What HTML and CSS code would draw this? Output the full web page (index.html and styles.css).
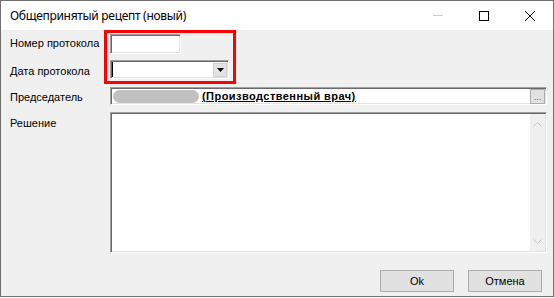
FILE: index.html
```html
<!DOCTYPE html>
<html lang="ru">
<head>
    <meta charset="UTF-8">
    <meta name="viewport" content="width=device-width, initial-scale=1.0">
    <title>Общепринятый рецепт (новый)</title>
    <link rel="stylesheet" href="styles.css">
</head>
<body>
    <div class="window">
        <div class="titlebar">
            <span class="title">Общепринятый рецепт (новый)</span>
            <div class="caption-buttons">
                <span class="cap-btn"><svg width="10" height="1" viewBox="0 0 10 1"><rect width="10" height="1" fill="#cccccc"/></svg></span>
                <span class="cap-btn"><svg width="10" height="10" viewBox="0 0 10 10"><rect x="0.5" y="0.5" width="9" height="9" fill="none" stroke="#000" stroke-width="1"/></svg></span>
                <span class="cap-btn"><svg width="10" height="10" viewBox="0 0 10 10"><path d="M0 0 L10 10 M10 0 L0 10" stroke="#000" stroke-width="1"/></svg></span>
            </div>
        </div>

        <div class="client">
            <div class="row row-num">
                <label class="lbl">Номер протокола</label>
                <div class="sunken edit-num"></div>
            </div>
            <div class="row row-date">
                <label class="lbl">Дата протокола</label>
                <div class="sunken combo">
                    <span class="caret"></span>
                    <span class="drop-btn"><svg width="7" height="4" viewBox="0 0 7 4"><polygon points="0,0 7,0 3.5,4" fill="#000"/></svg></span>
                </div>
            </div>
            <div class="row row-chair">
                <label class="lbl">Председатель</label>
                <div class="sunken chair">
                    <span class="blur"></span>
                    <span class="role">(Производственный врач)</span>
                    <span class="dots-btn">...</span>
                </div>
            </div>
            <div class="row row-memo">
                <label class="lbl">Решение</label>
                <div class="sunken memo">
                    <div class="memo-text"></div>
                    <div class="vscroll">
                        <svg width="9" height="5" viewBox="0 0 9 5"><polyline points="0.5,4.5 4.5,0.5 8.5,4.5" fill="none" stroke="#c2c2c2" stroke-width="1"/></svg>
                        <svg width="9" height="5" viewBox="0 0 9 5"><polyline points="0.5,0.5 4.5,4.5 8.5,0.5" fill="none" stroke="#c2c2c2" stroke-width="1"/></svg>
                    </div>
                </div>
            </div>
            <div class="buttons">
                <button class="btn">Ok</button>
                <button class="btn">Отмена</button>
            </div>
        </div>

        <div class="highlight"></div>
    </div>
</body>
</html>
```

FILE: styles.css
```css
body {
    margin: 0;
    background-color: #ffffff;
    font-family: "Liberation Sans", Arial, sans-serif;
    font-size: 11px;
    color: #000;
}

.window {
    position: relative;
    width: 554px;
    height: 297px;
    box-sizing: border-box;
    border: 1px solid #6f6f6f;
    background-color: #f0f0f0;
    display: flex;
    flex-direction: column;
}

.titlebar {
    height: 29px;
    flex: none;
    background-color: #ffffff;
    display: flex;
    align-items: center;
    padding-left: 9px;
}

.title {
    font-family: "Noto Sans", "Open Sans", sans-serif;
    font-size: 12px;
    letter-spacing: -0.3px;
}

.caption-buttons {
    margin-left: auto;
    display: flex;
    height: 100%;
}

.cap-btn {
    width: 46px;
    display: flex;
    align-items: center;
    justify-content: center;
}

.client {
    padding: 4px 6px 0 9px;
}

.row {
    display: flex;
}

.lbl {
    width: 100px;
    flex: none;
    line-height: 13px;
}

.row-num { margin-bottom: 6px; }
.row-num .lbl { padding-top: 3px; }
.row-date { margin-bottom: 8px; }
.row-date .lbl { padding-top: 5px; }
.row-chair { margin-bottom: 7px; }
.row-chair .lbl { padding-top: 4px; }
.row-memo .lbl { padding-top: 5px; }

.sunken {
    box-sizing: border-box;
    background-color: #ffffff;
    border-top: 1px solid #a0a0a0;
    border-left: 1px solid #a0a0a0;
    border-right: 1px solid #ffffff;
    border-bottom: 1px solid #ffffff;
    box-shadow: inset 1px 1px 0 #696969, inset -1px -1px 0 #e3e3e3;
    padding: 1px;
}

.edit-num {
    width: 71px;
    height: 20px;
}

.combo {
    width: 119px;
    height: 19px;
    display: flex;
    align-items: center;
}

.caret {
    width: 1px;
    align-self: stretch;
    background-color: #000;
}

.drop-btn {
    margin-left: auto;
    width: 14px;
    height: 14px;
    box-sizing: border-box;
    border: 1px solid #cfcfcf;
    background-color: #e3e3e3;
    display: flex;
    align-items: center;
    justify-content: center;
}

.chair {
    flex: 1;
    height: 18px;
    display: flex;
    align-items: center;
}

.blur {
    width: 86px;
    height: 13px;
    margin-left: 1px;
    border-radius: 7px;
    background-color: #c0c0c0;
}

.role {
    margin-left: 3px;
    font-weight: bold;
    text-decoration: underline;
    letter-spacing: 0.45px;
}

.dots-btn {
    margin-left: auto;
    width: 15px;
    height: 15px;
    box-sizing: border-box;
    border: 1px solid #adadad;
    background-color: #e1e1e1;
    font-size: 9px;
    line-height: 14px;
    text-align: center;
    color: #3b6fb0;
}

.memo {
    flex: 1;
    height: 141px;
    display: flex;
}

.memo-text {
    flex: 1;
}

.vscroll {
    width: 15px;
    background-color: #f0f0f0;
    display: flex;
    flex-direction: column;
    justify-content: space-between;
    align-items: center;
    padding: 8px 0 7px;
}

.buttons {
    margin-top: 17px;
    margin-right: 5px;
    display: flex;
    justify-content: flex-end;
    gap: 14px;
}

.btn {
    width: 74px;
    height: 22px;
    box-sizing: border-box;
    border: 1px solid #adadad;
    background-color: #e1e1e1;
    font-family: "Liberation Sans", Arial, sans-serif;
    font-size: 11px;
    color: #000;
    padding: 0;
}

.highlight {
    position: absolute;
    left: 103px;
    top: 29px;
    width: 132px;
    height: 54px;
    box-sizing: border-box;
    border: 3px solid #ff0000;
}
```
